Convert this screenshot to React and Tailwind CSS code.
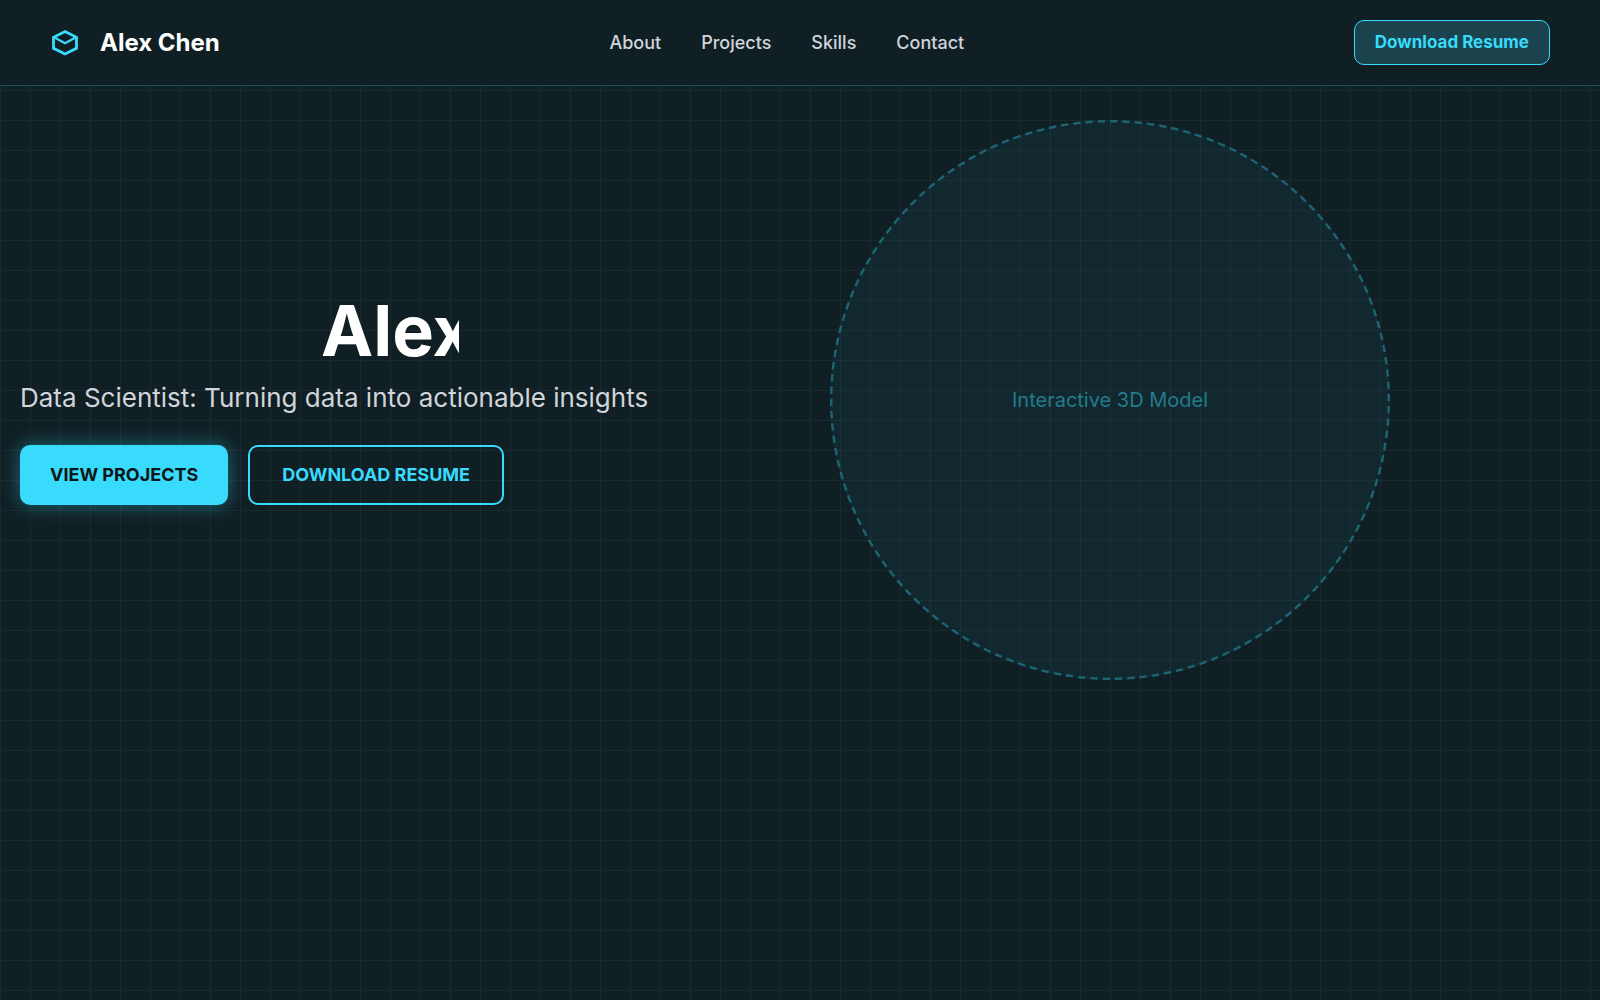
const navLinks = ["About", "Projects", "Skills", "Contact"];

function Logo() {
  return (
    <svg viewBox="0 0 26 26" className="h-[26px] w-[26px]" fill="none" stroke="#38dbfb" aria-hidden="true">
      <path d="M13 1.6 24.5 7.3V18.3L13 24 1.5 18.3V7.3Z" strokeWidth="2.8" />
      <path d="M2 7.3 13 13.2 24 7.3" strokeWidth="2.2" />
    </svg>
  );
}

function Header() {
  return (
    <header className="flex items-center justify-between border-b border-[#1d4f5b] bg-[#101f24] px-[50px] py-5">
      <a href="#top" className="flex items-center gap-[22px] pl-0.5 text-2xl font-bold text-white">
        <Logo />
        Alex Chen
      </a>
      <nav className="flex gap-10 text-lg font-medium text-[#d1d5db]">
        {navLinks.map((label) => (
          <a key={label} href={"#" + label.toLowerCase()}>{label}</a>
        ))}
      </nav>
      <button type="button" className="h-[45px] rounded-[10px] border border-[#38dbfb] bg-[#1a434e] px-5 text-[17px] font-bold text-[#38dbfb]">
        Download Resume
      </button>
    </header>
  );
}

function ModelPlaceholder() {
  return (
    <div className="mx-auto grid aspect-square w-full place-items-center px-2.5">
      <svg viewBox="0 0 560 560" className="col-start-1 row-start-1 w-full" aria-hidden="true">
        <circle cx="280" cy="280" r="280" fill="#38dbfb" fillOpacity="0.05" />
        <circle
          cx="280" cy="280" r="278.8" fill="none" stroke="#1d6474" strokeWidth="2.4"
          pathLength="1420" strokeDasharray="6 4" transform="rotate(-90 280 280)"
        />
      </svg>
      <p className="col-start-1 row-start-1 text-xl text-[#237b8c]">Interactive 3D Model</p>
    </div>
  );
}

function Hero() {
  return (
    <main id="top" className="grid grid-cols-[37fr_29fr] items-center gap-[60px] pt-6 pr-[12.5%] pb-10 pl-5">
      <div className="pb-1">
        <h1 className="mx-auto w-[138px] overflow-hidden text-[70px] leading-[80px] font-bold whitespace-nowrap text-white">Alex</h1>
        <p className="mt-2 text-[26px] leading-[38px] whitespace-nowrap text-[#d1d5db]">
          Data Scientist: Turning data into actionable insights
        </p>
        <div className="mt-7 flex gap-5 text-lg font-bold">
          <button type="button" className="h-[60px] rounded-[10px] bg-[#38dbfb] px-[30px] text-[#0d1518] shadow-[0_0_20px_#38dbfb66]">VIEW PROJECTS</button>
          <button type="button" className="h-[60px] rounded-[10px] border-2 border-[#38dbfb] px-8 text-[#38dbfb]">DOWNLOAD RESUME</button>
        </div>
      </div>
      <ModelPlaceholder />
    </main>
  );
}

export default function App() {
  return (
    <div className="min-h-screen bg-[#101f24] bg-[linear-gradient(#19292e_1px,transparent_1px),linear-gradient(90deg,#19292e_1px,transparent_1px)] bg-[size:30px_30px] font-['Inter',sans-serif]">
      <Header />
      <Hero />
    </div>
  );
}
